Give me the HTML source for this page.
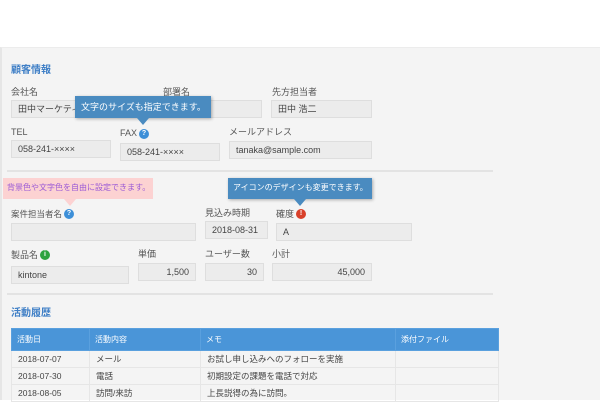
<!DOCTYPE html>
<html><head><meta charset="utf-8"><style>
*{margin:0;padding:0;box-sizing:border-box}
body{width:600px;height:400px;overflow:hidden;background:#fff;font-family:"Liberation Sans","Noto Sans CJK JP",sans-serif;position:relative;color:#444}
.bg{position:absolute;left:0;top:47px;width:600px;height:353px;background:#f4f4f4;border-left:2px solid #e6e6e6;border-top:1px solid #ececec}
.a{position:absolute;white-space:nowrap}
.lbl{font-size:9px;color:#555;line-height:10px}
.in{position:absolute;background:#ececec;border:1px solid #dedede;font-size:9px;color:#444;padding-left:6px;line-height:16px}
.r{text-align:right;padding-right:6px}
.h{font-size:10px;font-weight:bold;color:#3f7fc6}
.tip{position:absolute;background:#4a8bc0;color:#fff;font-size:9px;box-shadow:1px 1px 3px rgba(0,0,0,.3);padding-left:6px}
.arr{position:absolute;width:0;height:0;border-left:6px solid transparent;border-right:6px solid transparent}
.ic{position:absolute;width:10px;height:10px;border-radius:50%;color:#fff;font-size:7px;font-weight:bold;text-align:center;line-height:10px}
.line{position:absolute;left:7px;width:486px;height:2px;background:#e3e3e3}
table{position:absolute;left:11px;top:328px;width:488px;border-collapse:collapse;font-size:8.5px}
th{background:#4a95d8;color:#fff;font-weight:normal;text-align:left;height:22px;padding-left:5px;border:1px solid #5aa0de;font-size:8px}
td{height:17px;padding-left:6px;border:1px solid #e6e6e6;color:#444}
</style></head><body>
<div class="bg"></div>
<div class="a h" style="left:11px;top:61px">顧客情報</div>

<div class="a lbl" style="left:11px;top:87px">会社名</div>
<div class="in" style="left:11px;top:100px;width:140px;height:18px">田中マーケティング</div>
<div class="a lbl" style="left:163px;top:87px">部署名</div>
<div class="in" style="left:163px;top:100px;width:99px;height:18px"></div>
<div class="a lbl" style="left:272px;top:87px">先方担当者</div>
<div class="in" style="left:271px;top:100px;width:101px;height:18px">田中 浩二</div>

<div class="a lbl" style="left:11px;top:127px">TEL</div>
<div class="in" style="left:11px;top:140px;width:100px;height:18px">058-241-××××</div>
<div class="a lbl" style="left:120px;top:128px">FAX</div>
<div class="ic" style="left:139px;top:129px;background:#3d8fd8">?</div>
<div class="in" style="left:120px;top:143px;width:100px;height:18px">058-241-××××</div>
<div class="a lbl" style="left:229px;top:127px">メールアドレス</div>
<div class="in" style="left:229px;top:141px;width:143px;height:18px">tanaka@sample.com</div>

<div class="tip" style="left:75px;top:96px;width:136px;height:22px;line-height:22px">文字のサイズも指定できます。</div>
<div class="arr" style="left:137px;top:118px;border-top:7px solid #4a8bc0"></div>

<div class="line" style="top:170px"></div>

<div class="tip" style="left:3px;top:178px;width:150px;height:21px;line-height:20px;background:#fcd2d2;color:#9b5ad6;font-size:8px;padding-left:4px;box-shadow:none">背景色や文字色を自由に設定できます。</div>
<div class="arr" style="left:64px;top:199px;border-top:7px solid #fcd2d2"></div>
<div class="tip" style="left:228px;top:178px;width:144px;height:21px;line-height:20px;font-size:8px;padding-left:5px">アイコンのデザインも変更できます。</div>
<div class="arr" style="left:294px;top:199px;border-top:7px solid #4a8bc0"></div>

<div class="a lbl" style="left:11px;top:209px;font-size:8.5px">案件担当者名</div>
<div class="ic" style="left:64px;top:209px;background:#3d8fd8">?</div>
<div class="in" style="left:11px;top:223px;width:185px;height:18px"></div>
<div class="a lbl" style="left:205px;top:208px">見込み時期</div>
<div class="in" style="left:205px;top:221px;width:63px;height:18px">2018-08-31</div>
<div class="a lbl" style="left:276px;top:209px">確度</div>
<div class="ic" style="left:296px;top:209px;background:#d8402a">!</div>
<div class="in" style="left:276px;top:223px;width:136px;height:18px">A</div>

<div class="a lbl" style="left:11px;top:250px">製品名</div>
<div class="ic" style="left:40px;top:250px;background:#2ea33f">i</div>
<div class="in" style="left:11px;top:266px;width:118px;height:18px">kintone</div>
<div class="a lbl" style="left:138px;top:249px">単価</div>
<div class="in r" style="left:138px;top:263px;width:58px;height:18px">1,500</div>
<div class="a lbl" style="left:205px;top:249px">ユーザー数</div>
<div class="in r" style="left:205px;top:263px;width:59px;height:18px">30</div>
<div class="a lbl" style="left:272px;top:249px">小計</div>
<div class="in r" style="left:272px;top:263px;width:100px;height:18px">45,000</div>

<div class="line" style="top:293px"></div>
<div class="a h" style="left:11px;top:304px">活動履歴</div>
<table>
<tr><th style="width:78px">活動日</th><th style="width:111px">活動内容</th><th style="width:195px">メモ</th><th>添付ファイル</th></tr>
<tr><td>2018-07-07</td><td>メール</td><td>お試し申し込みへのフォローを実施</td><td></td></tr>
<tr><td>2018-07-30</td><td>電話</td><td>初期設定の課題を電話で対応</td><td></td></tr>
<tr><td>2018-08-05</td><td>訪問/来訪</td><td>上長説得の為に訪問。</td><td></td></tr>
</table>
</body></html>
